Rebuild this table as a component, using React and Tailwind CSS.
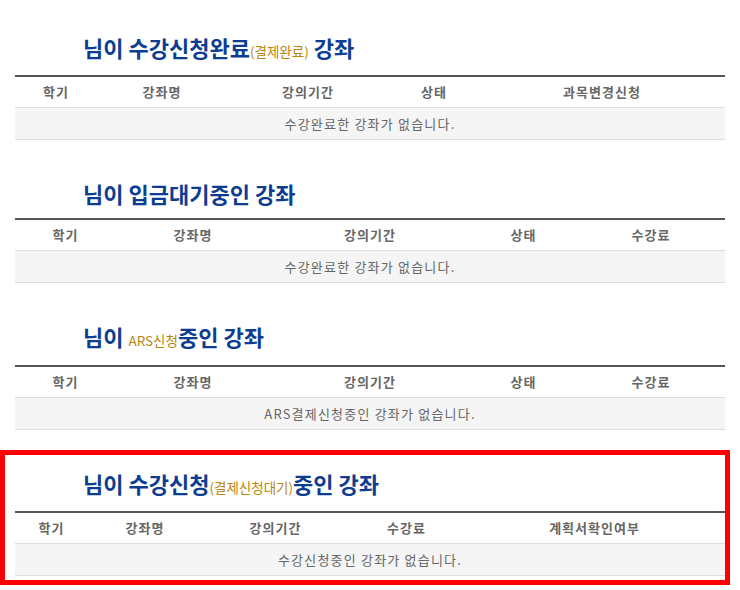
const font = { fontFamily: '"Noto Sans CJK KR", "Noto Sans", sans-serif' };

function Small({ children }) {
  return <span className="text-[13.5px] leading-none font-normal text-[#b8860b]">{children}</span>;
}

function CourseTable({ cols, headers, empty }) {
  return (
    <div className="border-t-2 border-[#555]">
      <div className={`grid ${cols} h-[31px] items-center border-b border-[#dddddd] text-[13px] tracking-[1px] font-bold text-[#666]`}>
        {headers.map((h) => (
          <div key={h} className="text-center">{h}</div>
        ))}
      </div>
      <div className="h-[32px] flex items-center justify-center bg-[#f5f5f5] border-b border-[#dddddd] text-[13px] tracking-[1.2px] text-[#666]">
        {empty}
      </div>
    </div>
  );
}

function Title({ children, className }) {
  return (
    <h2 className={`h-[30px] pl-[68px] text-[22px] leading-[30px] font-bold text-[#0d3d90] whitespace-nowrap ${className}`}>
      {children}
    </h2>
  );
}

export default function App() {
  return (
    <div className="w-[740px] min-h-[590px] bg-white pl-[15px] pr-[15px]" style={font}>
      <section className="pt-[32px]">
        <Title className="mb-[13px]">님이 수강신청완료<Small>(결제완료)</Small> 강좌</Title>
        <CourseTable
          cols="grid-cols-[82px_130px_162px_90px_1fr]"
          headers={['학기', '강좌명', '강의기간', '상태', '과목변경신청']}
          empty="수강완료한 강좌가 없습니다."
        />
      </section>

      <section className="mt-[38px]">
        <Title className="mb-[10px]">님이 입금대기중인 강좌</Title>
        <CourseTable
          cols="grid-cols-[101px_154px_200px_107px_1fr]"
          headers={['학기', '강좌명', '강의기간', '상태', '수강료']}
          empty="수강완료한 강좌가 없습니다."
        />
      </section>

      <section className="mt-[38px]">
        <Title className="mb-[14px]">님이 <Small>ARS신청</Small>중인 강좌</Title>
        <CourseTable
          cols="grid-cols-[101px_154px_200px_107px_1fr]"
          headers={['학기', '강좌명', '강의기간', '상태', '수강료']}
          empty="ARS결제신청중인 강좌가 없습니다."
        />
      </section>

      <section className="mt-[20px] ml-[-15px] w-[730px] border-[5px] border-[#ff0000] pl-[10px] pt-[13px] pb-[4px]">
        <Title className="mb-[13px]">님이 수강신청<Small>(결제신청대기)</Small>중인 강좌</Title>
        <CourseTable
          cols="grid-cols-[73px_114px_147px_115px_1fr]"
          headers={['학기', '강좌명', '강의기간', '수강료', '계획서확인여부']}
          empty="수강신청중인 강좌가 없습니다."
        />
      </section>
    </div>
  );
}
